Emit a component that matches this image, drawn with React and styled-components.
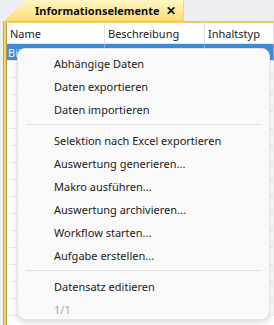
import React from "react";
import styled, { createGlobalStyle } from "styled-components";

const Global = createGlobalStyle`
  html, body {
    margin: 0;
    padding: 0;
    background: #eceef1;
    font-family: "Noto Sans", "Open Sans", sans-serif;
  }
`;

const Screen = styled.div`
  position: relative;
  width: 274px;
  height: 325px;
  overflow: hidden;
  background: #eceef1;
`;

const TabStrip = styled.div`
  height: 21px;
  display: flex;
  padding-left: 5px;
`;

const Tab = styled.div`
  display: flex;
  align-items: center;
  gap: 6px;
  height: 21px;
  padding: 0 7px 0 30px;
  background: linear-gradient(#fff7c4, #f9dc74);
  clip-path: polygon(21px 0, 100% 0, 100% 100%, 0 100%, 0 20px);
  font-size: 11px;
  font-weight: 700;
  color: #111;
  border-right: 1px solid #d9c27a;
`;

const Close = styled.span`
  font-size: 12px;
  font-weight: 700;
  line-height: 1;
`;

const Panel = styled.div`
  margin-left: 3px;
  height: 304px;
  border-left: 1px solid #a7a9ad;
  border-top: 1px solid #e4c65a;
  background: #f3d25e;
  padding: 1px 0 0 2px;
  box-sizing: border-box;
`;

const Grid = styled.div`
  height: 100%;
  background: #fff;
  border-left: 1px solid #b19a4a;
  display: grid;
  grid-template-columns: 98px 100px 1fr;
  grid-auto-rows: 17px;
  grid-template-rows: 21px;
  font-size: 11px;
  color: #222;
`;

const Head = styled.div`
  display: flex;
  align-items: center;
  padding-left: 3px;
  border-right: 1px solid #e2e2e2;
  border-bottom: 1px solid #e2e2e2;
`;

const Cell = styled.div`
  display: flex;
  align-items: center;
  padding-left: 1px;
  border-right: 1px solid ${(p) => (p.$sel ? "#7fb2e6" : "#ececec")};
  border-bottom: 1px solid #ececec;
  background: ${(p) => (p.$sel ? "#3e8ddb" : "#fff")};
  color: ${(p) => (p.$sel ? "#e8f2fc" : "#222")};
`;

const Menu = styled.div`
  position: absolute;
  left: 17px;
  top: 48px;
  width: 253px;
  height: 272px;
  box-sizing: border-box;
  background: #f9f9f9;
  border: 1px solid #e3e3e3;
  border-radius: 8px;
  box-shadow: 0 2px 6px rgba(0, 0, 0, 0.16);
  padding-top: 3px;
  overflow: hidden;
  display: flex;
  flex-direction: column;
  font-size: 11px;
`;

const Item = styled.div`
  flex-shrink: 0;
  height: 23px;
  display: flex;
  align-items: center;
  padding-left: 36px;
  color: ${(p) => (p.$disabled ? "#a6a6a6" : "#1b1b1b")};
`;

const Sep = styled.div`
  flex-shrink: 0;
  height: 1px;
  margin: 3px 8px 4px 8px;
  background: #e1e1e1;
`;

const rows = Array.from({ length: 16 });

export default function App() {
  return (
    <Screen>
      <Global />
      <TabStrip>
        <Tab>
          Informationselemente
          <Close>✕</Close>
        </Tab>
      </TabStrip>
      <Panel>
        <Grid>
          <Head>Name</Head>
          <Head>Beschreibung</Head>
          <Head>Inhaltstyp</Head>
          {rows.map((_, i) => (
            <React.Fragment key={i}>
              <Cell $sel={i === 0}>{i === 0 ? "Bild" : ""}</Cell>
              <Cell $sel={i === 0}></Cell>
              <Cell $sel={i === 0}>{i === 0 ? "Bild" : ""}</Cell>
            </React.Fragment>
          ))}
        </Grid>
      </Panel>
      <Menu>
        <Item>Abhängige Daten</Item>
        <Item>Daten exportieren</Item>
        <Item>Daten importieren</Item>
        <Sep />
        <Item>Selektion nach Excel exportieren</Item>
        <Item>Auswertung generieren...</Item>
        <Item>Makro ausführen...</Item>
        <Item>Auswertung archivieren...</Item>
        <Item>Workflow starten...</Item>
        <Item>Aufgabe erstellen...</Item>
        <Sep />
        <Item>Datensatz editieren</Item>
        <Item $disabled>1/1</Item>
      </Menu>
    </Screen>
  );
}
